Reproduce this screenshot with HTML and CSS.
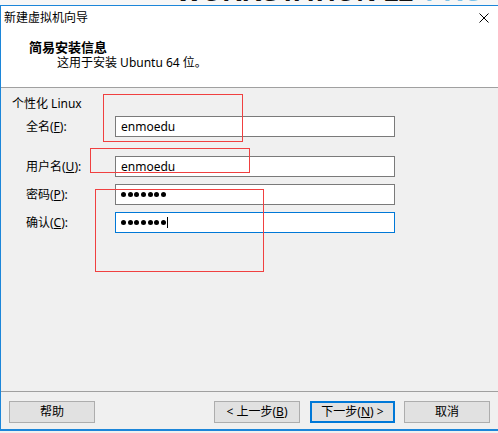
FILE: index.html
```html
<!DOCTYPE html>
<html lang="zh-CN">
<head>
    <meta charset="UTF-8">
    <title>新建虚拟机向导</title>
    <link rel="stylesheet" href="styles.css">
</head>
<body>
    <!-- Desktop wallpaper peeking out above the dialog -->
    <div class="desktop">
        <div class="brand">
            <span class="brand-name">WORKSTATION 12</span>
            <span class="brand-pro">PRO</span>
        </div>
    </div>

    <div class="window">
        <div class="titlebar">
            <span class="title">新建虚拟机向导</span>
            <svg class="close" width="10" height="10" viewBox="0 0 10 10">
                <path d="M0.5 0.5 L9.5 9.5 M9.5 0.5 L0.5 9.5" stroke="#000" stroke-width="1" fill="none"/>
            </svg>
        </div>

        <div class="header">
            <h1>简易安装信息</h1>
            <p>这用于安装 Ubuntu 64 位。</p>
        </div>

        <div class="content">
            <div class="group-label">个性化 Linux</div>

            <div class="form-row">
                <label>全名(<u>F</u>):</label>
                <div class="field">enmoedu</div>
            </div>
            <div class="form-row row-user">
                <label>用户名(<u>U</u>):</label>
                <div class="field">enmoedu</div>
            </div>
            <div class="form-row row-tight">
                <label>密码(<u>P</u>):</label>
                <div class="field dots">
                    <i></i><i></i><i></i><i></i><i></i><i></i><i></i>
                </div>
            </div>
            <div class="form-row row-tight">
                <label>确认(<u>C</u>):</label>
                <div class="field dots focused">
                    <i></i><i></i><i></i><i></i><i></i><i></i><i></i><span class="caret"></span>
                </div>
            </div>
        </div>

        <div class="footer">
            <button class="btn">帮助</button>
            <div class="nav-buttons">
                <button class="btn">&lt; 上一步(<u>B</u>)</button>
                <button class="btn btn-default">下一步(<u>N</u>) &gt;</button>
                <button class="btn btn-cancel">取消</button>
            </div>
        </div>

        <!-- red markup boxes drawn over the form -->
        <div class="mark mark-name"></div>
        <div class="mark mark-user"></div>
        <div class="mark mark-pass"></div>
    </div>
</body>
</html>
```

FILE: styles.css
```css
* {
    box-sizing: border-box;
}

body {
    margin: 0;
    padding: 0;
    font-family: "Noto Sans", "Noto Sans CJK SC", sans-serif;
    font-size: 12px;
    color: #000;
    background: #f0f0f0;
    overflow: hidden;
}

.desktop {
    height: 5px;
    overflow: hidden;
    background: #f7f7f7;
}

.brand {
    display: flex;
    align-items: baseline;
    margin-top: -22px;
    padding-left: 176px;
    font-family: "Liberation Sans", sans-serif;
    font-weight: bold;
    line-height: 28px;
}

.brand-name {
    font-size: 27px;
    color: #111;
}

.brand-pro {
    margin-left: 12px;
    font-size: 27px;
    color: #7cc3ea;
}

.window {
    position: relative;
    border-top: 1px solid #1c86d9;
    border-left: 1px solid #1c86d9;
    border-bottom: 2px solid #1c86d9;
    background: #f0f0f0;
}

.titlebar {
    height: 23px;
    display: flex;
    align-items: center;
    justify-content: space-between;
    background: #fff;
    padding-left: 3px;
    padding-right: 9px;
}

.title {
    line-height: 16px;
    color: #000;
}

.header {
    height: 59px;
    background: #fff;
    padding: 10px 0 0 28px;
    border-bottom: 1px solid #a0a0a0;
}

.header h1 {
    margin: 0;
    font-size: 13px;
    font-weight: bold;
    line-height: 16px;
}

.header p {
    margin: 0;
    padding-left: 28px;
    line-height: 16px;
}

.content {
    height: 303px;
    padding: 8px 0 0 11px;
}

.group-label {
    line-height: 16px;
}

.form-row {
    display: grid;
    grid-template-columns: 89px 280px;
    align-items: center;
    margin-top: 4px;
    padding-left: 14px;
}

.form-row.row-user {
    margin-top: 19px;
}

.form-row.row-tight {
    margin-top: 7px;
}

.form-row label {
    line-height: 16px;
}

.field {
    height: 21px;
    background: #fff;
    border: 1px solid #7a7a7a;
    padding-left: 5px;
    line-height: 19px;
    display: flex;
    align-items: center;
}

.field.focused {
    border-color: #0078d7;
}

.dots i {
    width: 5px;
    height: 5px;
    margin-right: 1.7px;
    border-radius: 50%;
    background: #000;
}

.caret {
    width: 1px;
    height: 11px;
    background: #000;
    margin-left: -1px;
}

.footer {
    height: 38px;
    border-top: 1px solid #a0a0a0;
    display: flex;
    padding: 9px 8px 0 8px;
}

.nav-buttons {
    display: flex;
    margin-left: auto;
}

.btn {
    width: 86px;
    height: 22px;
    padding: 0;
    background: #e1e1e1;
    border: 1px solid #adadad;
    font-family: inherit;
    font-size: 12px;
    line-height: 16px;
    color: #000;
}

.btn-default {
    width: 85px;
    margin-left: 10px;
    border: 2px solid #0078d7;
}

.btn-cancel {
    margin-left: 9px;
}

.mark {
    position: absolute;
    border: 1px solid #f04040;
}

.mark-name {
    left: 102px;
    top: 88px;
    width: 140px;
    height: 48px;
}

.mark-user {
    left: 89px;
    top: 142px;
    width: 160px;
    height: 25px;
}

.mark-pass {
    left: 94px;
    top: 183px;
    width: 169px;
    height: 83px;
}
```
